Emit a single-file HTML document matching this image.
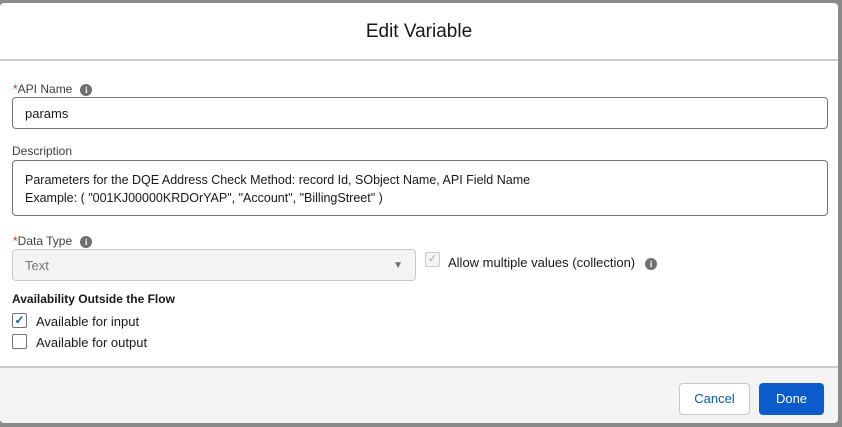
<!DOCTYPE html>
<html><head><style>
*{box-sizing:border-box;margin:0;padding:0}
body{width:842px;height:427px;background:#8a8a8a;font-family:"Liberation Sans",sans-serif;color:#181818;position:relative;overflow:hidden}
.modal{position:absolute;left:0;top:3px;width:838px;height:420px;background:#fff;border-radius:4px;overflow:hidden}
.hdr{height:58px;border-bottom:2px solid #c9c9c9;text-align:center;font-size:19px;line-height:58px;color:#181818}
.a{position:absolute}
.lbl{font-size:12px;color:#3e3e3c}
.req{color:#c23934}
.info{display:inline-block;width:12px;height:12px;border-radius:50%;background:#706e6b;color:#fff;font-size:9px;font-weight:bold;text-align:center;line-height:12px;vertical-align:0px;margin-left:8px;font-family:"Liberation Serif",serif}
.inp{border:1px solid #747474;border-radius:4px;background:#fff;font-size:13px;padding-left:12px}
.cb{width:15px;height:15px;border:1px solid #747474;border-radius:2px;background:#fff}
.ftr{position:absolute;left:0;top:363px;width:838px;height:57px;background:#f3f3f3;border-top:2px solid #c9c9c9}
.btn{position:absolute;border-radius:4px;font-size:13px;text-align:center;line-height:30px}
</style></head><body>
<div class="modal">
<div class="hdr">Edit Variable</div>
<div class="a lbl" style="left:13px;top:79px"><span class="req">*</span>API Name<span class="info">i</span></div>
<div class="a inp" style="left:12px;top:94px;width:816px;height:32px;line-height:32px">params</div>
<div class="a lbl" style="left:12px;top:141px">Description</div>
<div class="a inp" style="left:12px;top:157px;width:816px;height:56px;padding-top:10px;line-height:18px;font-size:12.5px">Parameters for the DQE Address Check Method: record Id, SObject Name, API Field Name<br>Example: ( "001KJ00000KRDOrYAP", "Account", "BillingStreet" )</div>
<div class="a lbl" style="left:13px;top:231px"><span class="req">*</span>Data Type<span class="info">i</span></div>
<div class="a inp" style="left:12px;top:246px;width:404px;height:32px;line-height:32px;background:#f3f3f3;border-color:#c9c9c9;color:#747474">Text<span style="position:absolute;right:12px;top:0;font-size:10px;color:#706e6b">&#9660;</span></div>
<div class="a cb" style="left:425px;top:249px;border-color:#c9c9c9;background:#f3f3f3;font-size:11px;color:#aaa;text-align:center;line-height:13px">&#10003;</div>
<div class="a" style="left:448px;top:252px;font-size:13px">Allow multiple values (collection)<span class="info" style="margin-left:10px">i</span></div>
<div class="a" style="left:12px;top:289px;font-size:12px;font-weight:bold">Availability Outside the Flow</div>
<div class="a cb" style="left:12px;top:310px;color:#0b5cab;font-size:12px;font-weight:bold;text-align:center;line-height:13px">&#10003;</div>
<div class="a" style="left:36px;top:311px;font-size:13px">Available for input</div>
<div class="a cb" style="left:12px;top:331px"></div>
<div class="a" style="left:36px;top:332px;font-size:13px">Available for output</div>
<div class="ftr">
<div class="btn" style="left:679px;top:15px;width:71px;height:32px;border:1px solid #c9c9c9;background:#fff;color:#0b5cab">Cancel</div>
<div class="btn" style="left:759px;top:15px;width:65px;height:32px;background:#0b5cca;color:#fff;line-height:32px">Done</div>
</div>
</div>
</body></html>
